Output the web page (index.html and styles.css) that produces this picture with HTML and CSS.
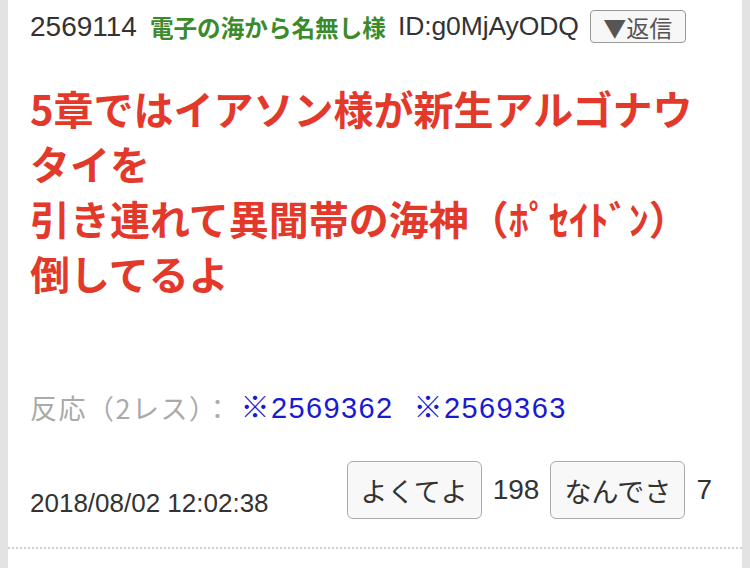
FILE: index.html
```html
<!DOCTYPE html>
<html lang="ja">
<head>
<meta charset="utf-8">
<link rel="stylesheet" href="styles.css">
</head>
<body>
<div class="page">
  <article class="post">
    <header class="post-head">
      <span class="num">2569114</span>
      <span class="name">電子の海から名無し様</span>
      <span class="uid">ID:g0MjAyODQ</span>
      <button class="reply">▼返信</button>
    </header>
    <div class="body">5章ではイアソン様が新生アルゴナウタイを<br>引き連れて異聞帯の海神（ﾎﾟｾｲﾄﾞﾝ）<br>倒してるよ</div>
    <div class="reactions">
      <span class="label">反応（2レス）：</span><a class="ref">※2569362</a><a class="ref">※2569363</a>
    </div>
    <footer class="post-foot">
      <span class="time">2018/08/02 12:02:38</span>
      <div class="votes">
        <button class="vote">よくてよ</button><span class="count">198</span>
        <button class="vote">なんでさ</button><span class="count">7</span>
      </div>
    </footer>
  </article>
</div>
</body>
</html>
```

FILE: styles.css
```css
html, body {
  margin: 0;
  padding: 0;
}
body {
  background: #e3e3e3;
  font-family: "Liberation Sans", "Noto Sans CJK JP", sans-serif;
  color: #333;
}
.page {
  margin: 0 8px;
  background: #fff;
  height: 568px;
}
.post {
  padding: 10px 22px 28px;
  border-bottom: 2px dotted #d0d0d0;
}
.post-head {
  display: flex;
  align-items: center;
  height: 33px;
  font-size: 24px;
  white-space: nowrap;
}
.num {
  font-size: 28px;
  color: #333;
  margin-right: 13px;
}
.name {
  font-family: "Noto Sans CJK JP", sans-serif;
  font-weight: bold;
  color: #3b8a2b;
  font-size: 23.6px;
  margin-right: 12px;
}
.uid {
  font-size: 26.5px;
  letter-spacing: -0.1px;
  color: #333;
  margin-right: 11px;
}
.reply {
  font-family: "Noto Sans CJK JP", sans-serif;
  font-size: 23px;
  color: #555;
  background: #f7f7f7;
  border: 1.5px solid #999;
  border-radius: 4px;
  height: 33px;
  width: 96px;
  padding: 0;
  line-height: 30px;
}
.body {
  margin-top: 38px;
  font-family: "Noto Sans CJK JP", sans-serif;
  font-weight: bold;
  font-size: 40px;
  line-height: 55px;
  color: #e3392b;
}
.reactions {
  margin-top: 89px;
  height: 36px;
  line-height: 36px;
  white-space: nowrap;
  display: flex;
  align-items: center;
}
.label {
  font-family: "Noto Sans CJK JP", sans-serif;
  font-size: 27px;
  letter-spacing: 1.5px;
  color: #aaa;
  margin-right: 8px;
}
.ref {
  font-family: "Liberation Sans", "Noto Sans CJK JP", sans-serif;
  font-size: 29px;
  letter-spacing: 1.4px;
  color: #1a1ad0;
  margin-right: 20px;
}
.post-foot {
  margin-top: 35px;
  display: flex;
  align-items: flex-end;
  justify-content: space-between;
}
.time {
  font-size: 26px;
  line-height: 32px;
  color: #333;
}
.votes {
  display: flex;
  align-items: center;
  gap: 11px;
  margin-right: 8px;
}
.vote {
  font-family: "Noto Sans CJK JP", sans-serif;
  font-size: 27px;
  color: #333;
  background: #f8f8f8;
  border: 1.5px solid #aaa;
  border-radius: 6px;
  height: 58px;
  width: 135px;
  padding: 0;
}
.count {
  font-size: 28px;
  color: #333;
}
```
